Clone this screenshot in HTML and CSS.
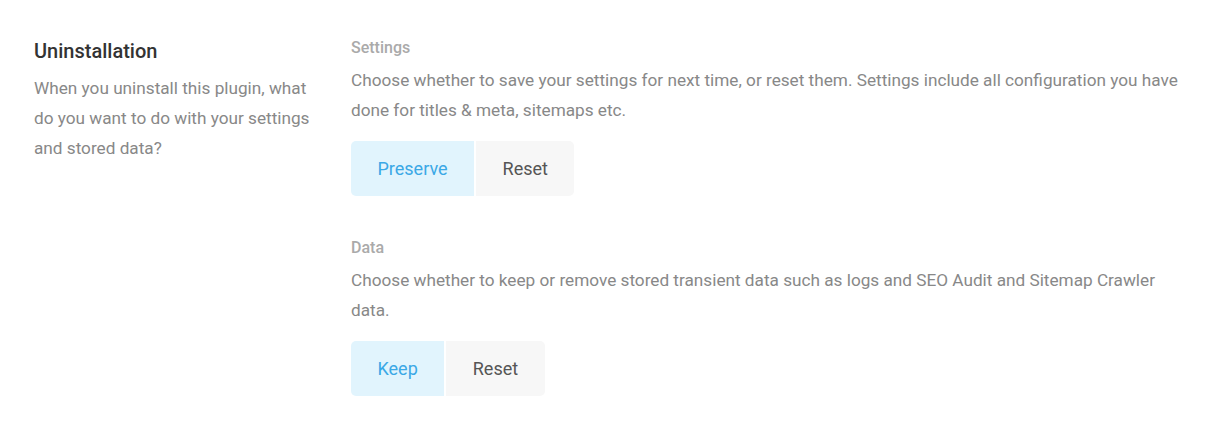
FILE: index.html
```html
<!DOCTYPE html>
<html>
<head>
<meta charset="utf-8">
<link rel="stylesheet" href="styles.css">
</head>
<body>
<div class="section">
  <div class="intro">
    <h2 class="title">Uninstallation</h2>
    <p class="intro-text">When you uninstall this plugin, what do you want to do with your settings and stored data?</p>
  </div>
  <div class="options">
    <div class="option">
      <div class="label">Settings</div>
      <p class="desc">Choose whether to save your settings for next time, or reset them. Settings include all configuration you have done for titles &amp; meta, sitemaps etc.</p>
      <div class="toggle">
        <button class="btn active">Preserve</button>
        <button class="btn">Reset</button>
      </div>
    </div>
    <div class="option">
      <div class="label">Data</div>
      <p class="desc">Choose whether to keep or remove stored transient data such as logs and SEO Audit and Sitemap Crawler data.</p>
      <div class="toggle">
        <button class="btn active">Keep</button>
        <button class="btn">Reset</button>
      </div>
    </div>
  </div>
</div>
</body>
</html>
```
FILE: styles.css
```css
* { box-sizing: border-box; }
html, body { margin: 0; padding: 0; background: #fff; }
body {
  font-family: Roboto, "Liberation Sans", sans-serif;
  color: #888;
}
.section {
  display: flex;
  gap: 37px;
  padding: 38px 30px 0 34px;
}
.intro { width: 280px; flex: none; }
.title {
  margin: 0;
  font-size: 20px;
  font-weight: 500;
  color: #333;
  line-height: 26px;
}
.intro-text {
  margin: 9px 0 0;
  font-size: 17.2px;
  line-height: 30px;
  color: #888;
}
.options { width: 840px; }
.option { margin-bottom: 42px; }
.label {
  font-size: 16px;
  font-weight: 500;
  color: #aaa;
  line-height: 20px;
}
.desc {
  margin: 7px 0 16px;
  font-size: 17.2px;
  line-height: 30px;
  color: #888;
}
.toggle { display: flex; gap: 2px; }
.btn {
  font-family: inherit;
  font-size: 18px;
  font-weight: 400;
  border: none;
  height: 55px;
  padding: 0 26.5px;
  background: #f7f7f7;
  color: #555;
  cursor: pointer;
}
.btn:first-child { border-radius: 5px 0 0 5px; }
.btn:last-child { border-radius: 0 5px 5px 0; }
.btn.active { background: #e1f4fd; color: #3aa8e6; }
```
